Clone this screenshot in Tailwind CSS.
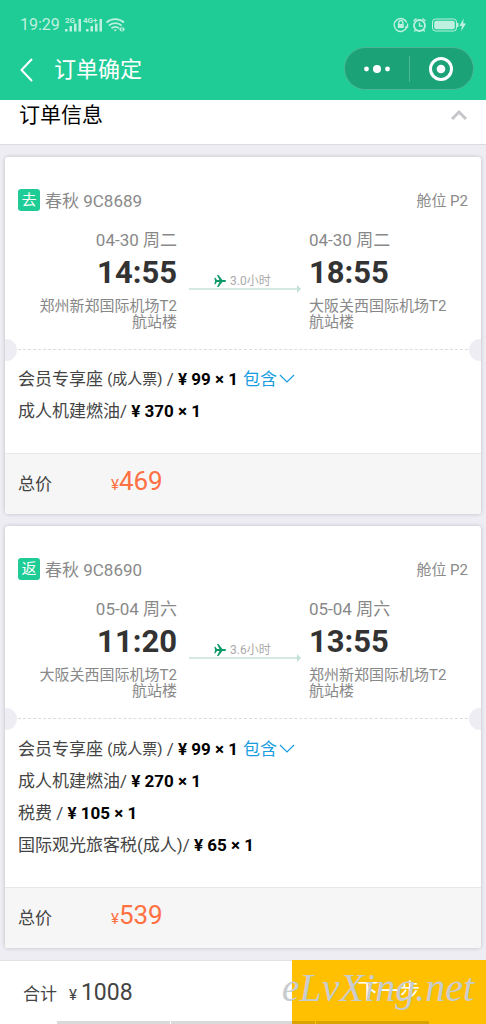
<!DOCTYPE html>
<html lang="zh-CN">
<head>
<meta charset="utf-8">
<meta name="viewport" content="width=device-width, initial-scale=1">
<title>订单确定</title>
<script src="https://cdn.jsdelivr.net/npm/@tailwindcss/browser@4"></script>
</head>
<body class="min-h-screen flex flex-col bg-[#eeedf3] font-['Roboto','Noto_Sans_CJK_SC',sans-serif] text-[17px] text-[#444]">

<svg class="hidden" aria-hidden="true">
  <symbol id="plane" viewBox="0 0 12 14">
    <path d="M0.3 3.800h1.100L3 6h2.400L3 1h1.500l3.900 5h2.200c.9 0 1.400.5 1.400 1s-.5 1-1.400 1H8.400l-3.900 5H3l2.400-5H3L1.400 10.200H.3L1.100 7z" fill="#0e9a68"/>
  </symbol>
  <symbol id="route" viewBox="0 0 112 8">
    <path d="M0 4h109" stroke="#d3e9e1" stroke-width="2"/><path d="M108 0l4 4-4 4z" fill="#c3e2d6"/>
  </symbol>
  <symbol id="down" viewBox="0 0 16 10">
    <path d="M1 1l7 7 7-7" fill="none" stroke="#1a9de0" stroke-width="1.2"/>
  </symbol>
</svg>

<header class="bg-[#20cc96] text-white">
  <div class="flex h-12 items-center justify-between px-5 pt-0.5 text-[#bdf0de]">
    <div class="flex items-center">
      <span class="text-[16px]">19:29</span>
      <svg class="ml-1 h-4 w-[62px]" viewBox="0 0 62 16" fill="#bdf0de">
        <text x="1" y="6" font-size="8" font-weight="bold">2G</text>
        <path d="M1 12h2.500v2.500H1zM5.500 9H8v5.500H5.500zM10 6.500h2.500v8H10zM14.500 2H17v12.500h-2.500z"/>
        <text x="19" y="6" font-size="8" font-weight="bold">4G+</text>
        <path d="M22 12h2.500v2.500H22zM26.500 9H29v5.500h-2.500zM31 6.500h2.500v8H31zM35.500 2H38v12.500h-2.500z"/>
        <g fill="none" stroke="#bdf0de" stroke-width="1.800"><path d="M42.500 5.500c5-4.500 12.500-4.500 17.500 0M45 8.500c3.500-3.300 9-3.300 12.500 0M47.500 11.300c2-2 5.500-2 7.500 0"/></g>
        <path d="M49.500 12.500h3.500l-1.800 2zM57.500 9.500v5.500l-2.500-2.700zM58.500 9.500v5.500l2.500-2.700z"/>
      </svg>
    </div>
    <svg class="h-4 w-[73px]" viewBox="0 0 73 16" fill="none" stroke="#bdf0de" stroke-width="1.400">
      <path d="M13.700 10.500A6.500 6.500 0 1 1 13.700 5.500M14.500 6.500v3.500h-2.500"/>
      <path d="M5.800 7V5.500a2 2 0 0 1 4 0V7"/><path d="M4.800 7h6v4h-6z" fill="#bdf0de" stroke="none"/>
      <circle cx="26.500" cy="8.500" r="5.500" stroke-width="1.800"/><path d="M26.500 5.500v3.500h3M20.500 4l3-2.500M32.500 4l-3-2.500M22.500 13l-1.200 1.500M30.500 13l1.200 1.500"/>
      <rect x="39.500" y="2" width="24" height="12" rx="3" stroke-width="1"/><rect x="41.200" y="3.700" width="20.600" height="8.600" rx="2" fill="#bdf0de" stroke="none"/>
      <path d="M64 6h1.500v4H64zM70.500 1.500L66.500 9h2.500l-1 5.500L73 6.500h-2.700z" fill="#bdf0de" stroke="none"/>
    </svg>
  </div>
  <div class="flex h-[52px] items-start justify-between pl-4 pr-3">
    <div class="flex items-center">
      <button type="button" aria-label="返回" class="flex h-[42px] w-[38px] items-center">
        <svg class="h-6 w-4 ml-1" viewBox="0 0 16 24" fill="none" stroke="#fff" stroke-width="2"><path d="M12 1L1.500 12 12 23"/></svg>
      </button>
      <h1 class="text-[22px] leading-[44px]">订单确定</h1>
    </div>
    <div class="-mt-px flex h-[43px] w-[130px] items-center rounded-full border border-[#4bb894] bg-[#1ba277]">
      <button type="button" aria-label="更多" class="flex h-full flex-1 items-center justify-center">
        <svg class="h-2 w-7" viewBox="0 0 28 8" fill="#fff"><circle cx="3.500" cy="4" r="2.400"/><circle cx="14" cy="4" r="4"/><circle cx="24.500" cy="4" r="2.400"/></svg>
      </button>
      <span class="h-[26px] w-px bg-[#4bb894]"></span>
      <button type="button" aria-label="关闭" class="flex h-full flex-1 items-center justify-center">
        <svg class="size-6" viewBox="0 0 24 24"><circle cx="12" cy="12" r="10.500" fill="none" stroke="#fff" stroke-width="3"/><circle cx="12" cy="12" r="4.300" fill="#fff"/></svg>
      </button>
    </div>
  </div>
</header>

<main class="flex flex-1 flex-col">
  <button type="button" class="flex h-[45px] items-start justify-between border-b border-[#dddddf] bg-white pl-[19px] pr-[18px] text-black">
    <span class="text-[21px] leading-[30px]">订单信息</span>
    <svg class="mt-2 h-4 w-[18px]" viewBox="0 0 18 16" fill="none" stroke="#c6c6ca" stroke-width="3"><path d="M2 11l7-7 7 7"/></svg>
  </button>

  <div class="flex flex-col gap-3 px-[5px] py-3">
    <section class="overflow-hidden rounded-[3px] bg-white shadow-[0_0_4px_rgba(0,0,0,0.2)]">
      <div class="px-[13px] pt-8">
        <div class="flex h-[22px] items-center text-[#8a8a8a]">
          <span class="flex size-[22px] items-center justify-center rounded-[3px] bg-[#20cc96] text-[15px] text-white">去</span>
          <h2 class="ml-[5px] flex-1 pt-0.5 leading-6">春秋 9C8689</h2>
          <span class="pt-0.5 text-[15px]">舱位 P2</span>
        </div>
        <div class="mt-[17px] flex">
          <div class="mr-3 flex flex-1 flex-col items-end text-right text-[#888]">
            <p class="leading-6">04-30 周二</p>
            <p class="mt-0.5 text-[31px] font-bold leading-[38px] text-[#333]">14:55</p>
            <p class="mt-1.5 max-w-36 text-[15px] leading-4">郑州新郑国际机场T2航站楼</p>
          </div>
          <div class="w-28 pt-[45px]">
            <div class="flex h-4 items-center pl-[25px] text-[12px] text-[#aaa]">
              <svg class="mr-1 h-3.5 w-3"><use href="#plane"/></svg>3.0小时
            </div>
            <svg class="-mt-1 h-2 w-28"><use href="#route"/></svg>
          </div>
          <div class="ml-2 flex-1 text-[#888]">
            <p class="leading-6">04-30 周二</p>
            <p class="mt-0.5 text-[31px] font-bold leading-[38px] text-[#333]">18:55</p>
            <p class="mt-1.5 max-w-36 text-[15px] leading-4">大阪关西国际机场T2航站楼</p>
          </div>
        </div>
      </div>
      <div class="relative mt-[19px] px-[13px]">
        <div class="border-t border-dashed border-[#dcdcdc]"></div>
        <span class="absolute -left-2.5 -top-2.5 size-[22px] rounded-full bg-[#eeedf3]"></span>
        <span class="absolute -right-2.5 -top-2.5 size-[22px] rounded-full bg-[#eeedf3]"></span>
      </div>
      <ul class="px-[13px] pb-[26px] pt-[13px] leading-8">
        <li class="flex h-8 items-center whitespace-pre"><span>会员专享座 </span><span class="text-[15px]">(成人票)</span><span> / </span><b class="text-black">¥ 99 × 1</b>
          <button type="button" class="ml-[5px] flex items-center text-[#1a9de0]">包含<svg class="ml-0.5 h-2.5 w-4"><use href="#down"/></svg></button></li>
        <li class="h-8">成人机建燃油/ <b class="text-black">¥ 370 × 1</b></li>
      </ul>
      <div class="flex h-[61px] items-baseline border-t border-[#e8e8e8] bg-[#f6f6f6] px-[13px] pt-2">
        <span class="w-[93px]">总价</span>
        <span class="text-[15px] text-[#ff7043]">¥<span class="text-[26px]">469</span></span>
      </div>
    </section>

    <section class="overflow-hidden rounded-[3px] bg-white shadow-[0_0_4px_rgba(0,0,0,0.2)]">
      <div class="px-[13px] pt-8">
        <div class="flex h-[22px] items-center text-[#8a8a8a]">
          <span class="flex size-[22px] items-center justify-center rounded-[3px] bg-[#20cc96] text-[15px] text-white">返</span>
          <h2 class="ml-[5px] flex-1 pt-0.5 leading-6">春秋 9C8690</h2>
          <span class="pt-0.5 text-[15px]">舱位 P2</span>
        </div>
        <div class="mt-[17px] flex">
          <div class="mr-3 flex flex-1 flex-col items-end text-right text-[#888]">
            <p class="leading-6">05-04 周六</p>
            <p class="mt-0.5 text-[31px] font-bold leading-[38px] text-[#333]">11:20</p>
            <p class="mt-1.5 max-w-36 text-[15px] leading-4">大阪关西国际机场T2航站楼</p>
          </div>
          <div class="w-28 pt-[45px]">
            <div class="flex h-4 items-center pl-[25px] text-[12px] text-[#aaa]">
              <svg class="mr-1 h-3.5 w-3"><use href="#plane"/></svg>3.6小时
            </div>
            <svg class="-mt-1 h-2 w-28"><use href="#route"/></svg>
          </div>
          <div class="ml-2 flex-1 text-[#888]">
            <p class="leading-6">05-04 周六</p>
            <p class="mt-0.5 text-[31px] font-bold leading-[38px] text-[#333]">13:55</p>
            <p class="mt-1.5 max-w-36 text-[15px] leading-4">郑州新郑国际机场T2航站楼</p>
          </div>
        </div>
      </div>
      <div class="relative mt-[19px] px-[13px]">
        <div class="border-t border-dashed border-[#dcdcdc]"></div>
        <span class="absolute -left-2.5 -top-2.5 size-[22px] rounded-full bg-[#eeedf3]"></span>
        <span class="absolute -right-2.5 -top-2.5 size-[22px] rounded-full bg-[#eeedf3]"></span>
      </div>
      <ul class="px-[13px] pb-[26px] pt-3.5 leading-8">
        <li class="flex h-8 items-center whitespace-pre"><span>会员专享座 </span><span class="text-[15px]">(成人票)</span><span> / </span><b class="text-black">¥ 99 × 1</b>
          <button type="button" class="ml-[5px] flex items-center text-[#1a9de0]">包含<svg class="ml-0.5 h-2.5 w-4"><use href="#down"/></svg></button></li>
        <li class="h-8">成人机建燃油/ <b class="text-black">¥ 270 × 1</b></li>
        <li class="h-8">税费 / <b class="text-black">¥ 105 × 1</b></li>
        <li class="h-8">国际观光旅客税(成人)/ <b class="text-black">¥ 65 × 1</b></li>
      </ul>
      <div class="flex h-[61px] items-baseline border-t border-[#e8e8e8] bg-[#f6f6f6] px-[13px] pt-2">
        <span class="w-[93px]">总价</span>
        <span class="text-[15px] text-[#ff7043]">¥<span class="text-[26px]">539</span></span>
      </div>
    </section>
  </div>
</main>

<footer class="relative flex h-16 bg-white">
  <div class="flex w-3/5 items-baseline border-t border-[#e2e2e4] pl-[23px] pt-[15px]">
    <span>合计</span>
    <span class="ml-3 text-[15px]">¥</span>
    <span class="ml-1 text-[23px]">1008</span>
  </div>
  <button type="button" class="w-2/5 bg-[#ffc001] text-[21px] text-white">下一步</button>
  <span class="pointer-events-none absolute right-3 top-0.5 font-['Liberation_Serif',serif] text-[40px] italic leading-[52px] text-[#c8cccf]">eLvXing.net</span>
  <div class="pointer-events-none absolute bottom-0 left-[57px] flex h-[3px] gap-px">
    <span class="w-[113px] bg-black/15"></span><span class="w-[144px] bg-black/15"></span><span class="w-[113px] bg-black/15"></span>
  </div>
</footer>
</body>
</html>
